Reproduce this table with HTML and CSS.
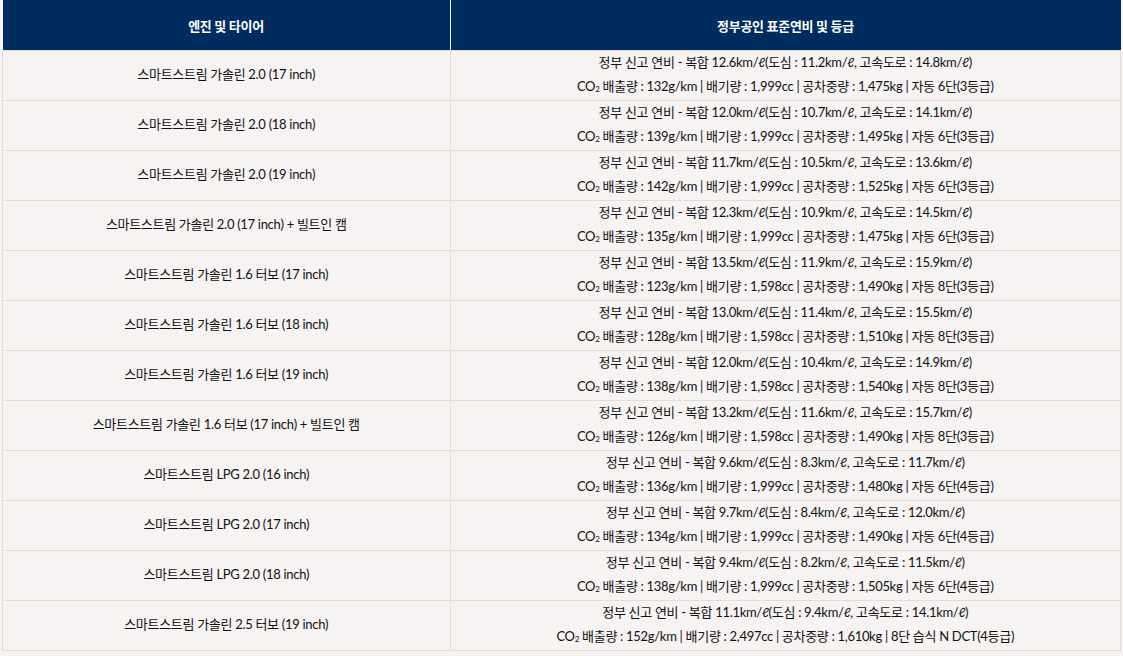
FILE: index.html
```html
<!DOCTYPE html>
<html lang="ko">
<head>
<meta charset="utf-8">
<link rel="stylesheet" href="styles.css">
</head>
<body>
<table class="spec">
  <thead>
    <tr><th class="c1">엔진 및 타이어</th><th class="c2">정부공인 표준연비 및 등급</th></tr>
  </thead>
  <tbody>
    <tr><td><div class="in">스마트스트림 가솔린 2.0 (17 inch)</div></td><td><div class="in">정부 신고 연비 - 복합 12.6km/ℓ(도심 : 11.2km/ℓ, 고속도로 : 14.8km/ℓ)<br>CO<sub>2</sub> 배출량 : 132g/km | 배기량 : 1,999cc | 공차중량 : 1,475kg | 자동 6단(3등급)</div></td></tr>
    <tr><td><div class="in">스마트스트림 가솔린 2.0 (18 inch)</div></td><td><div class="in">정부 신고 연비 - 복합 12.0km/ℓ(도심 : 10.7km/ℓ, 고속도로 : 14.1km/ℓ)<br>CO<sub>2</sub> 배출량 : 139g/km | 배기량 : 1,999cc | 공차중량 : 1,495kg | 자동 6단(3등급)</div></td></tr>
    <tr><td><div class="in">스마트스트림 가솔린 2.0 (19 inch)</div></td><td><div class="in">정부 신고 연비 - 복합 11.7km/ℓ(도심 : 10.5km/ℓ, 고속도로 : 13.6km/ℓ)<br>CO<sub>2</sub> 배출량 : 142g/km | 배기량 : 1,999cc | 공차중량 : 1,525kg | 자동 6단(3등급)</div></td></tr>
    <tr><td><div class="in">스마트스트림 가솔린 2.0 (17 inch) + 빌트인 캠</div></td><td><div class="in">정부 신고 연비 - 복합 12.3km/ℓ(도심 : 10.9km/ℓ, 고속도로 : 14.5km/ℓ)<br>CO<sub>2</sub> 배출량 : 135g/km | 배기량 : 1,999cc | 공차중량 : 1,475kg | 자동 6단(3등급)</div></td></tr>
    <tr><td><div class="in">스마트스트림 가솔린 1.6 터보 (17 inch)</div></td><td><div class="in">정부 신고 연비 - 복합 13.5km/ℓ(도심 : 11.9km/ℓ, 고속도로 : 15.9km/ℓ)<br>CO<sub>2</sub> 배출량 : 123g/km | 배기량 : 1,598cc | 공차중량 : 1,490kg | 자동 8단(3등급)</div></td></tr>
    <tr><td><div class="in">스마트스트림 가솔린 1.6 터보 (18 inch)</div></td><td><div class="in">정부 신고 연비 - 복합 13.0km/ℓ(도심 : 11.4km/ℓ, 고속도로 : 15.5km/ℓ)<br>CO<sub>2</sub> 배출량 : 128g/km | 배기량 : 1,598cc | 공차중량 : 1,510kg | 자동 8단(3등급)</div></td></tr>
    <tr><td><div class="in">스마트스트림 가솔린 1.6 터보 (19 inch)</div></td><td><div class="in">정부 신고 연비 - 복합 12.0km/ℓ(도심 : 10.4km/ℓ, 고속도로 : 14.9km/ℓ)<br>CO<sub>2</sub> 배출량 : 138g/km | 배기량 : 1,598cc | 공차중량 : 1,540kg | 자동 8단(3등급)</div></td></tr>
    <tr><td><div class="in">스마트스트림 가솔린 1.6 터보 (17 inch) + 빌트인 캠</div></td><td><div class="in">정부 신고 연비 - 복합 13.2km/ℓ(도심 : 11.6km/ℓ, 고속도로 : 15.7km/ℓ)<br>CO<sub>2</sub> 배출량 : 126g/km | 배기량 : 1,598cc | 공차중량 : 1,490kg | 자동 8단(3등급)</div></td></tr>
    <tr><td><div class="in">스마트스트림 LPG 2.0 (16 inch)</div></td><td><div class="in">정부 신고 연비 - 복합 9.6km/ℓ(도심 : 8.3km/ℓ, 고속도로 : 11.7km/ℓ)<br>CO<sub>2</sub> 배출량 : 136g/km | 배기량 : 1,999cc | 공차중량 : 1,480kg | 자동 6단(4등급)</div></td></tr>
    <tr><td><div class="in">스마트스트림 LPG 2.0 (17 inch)</div></td><td><div class="in">정부 신고 연비 - 복합 9.7km/ℓ(도심 : 8.4km/ℓ, 고속도로 : 12.0km/ℓ)<br>CO<sub>2</sub> 배출량 : 134g/km | 배기량 : 1,999cc | 공차중량 : 1,490kg | 자동 6단(4등급)</div></td></tr>
    <tr><td><div class="in">스마트스트림 LPG 2.0 (18 inch)</div></td><td><div class="in">정부 신고 연비 - 복합 9.4km/ℓ(도심 : 8.2km/ℓ, 고속도로 : 11.5km/ℓ)<br>CO<sub>2</sub> 배출량 : 138g/km | 배기량 : 1,999cc | 공차중량 : 1,505kg | 자동 6단(4등급)</div></td></tr>
    <tr><td><div class="in">스마트스트림 가솔린 2.5 터보 (19 inch)</div></td><td><div class="in">정부 신고 연비 - 복합 11.1km/ℓ(도심 : 9.4km/ℓ, 고속도로 : 14.1km/ℓ)<br>CO<sub>2</sub> 배출량 : 152g/km | 배기량 : 2,497cc | 공차중량 : 1,610kg | 8단 습식 N DCT(4등급)</div></td></tr>
  </tbody>
</table>
</body>
</html>
```
FILE: styles.css
```css
html, body {
  margin: 0;
  padding: 0;
  background: #f6f3f2;
}
body {
  padding: 0 2px;
  font-family: Lato, "Noto Sans CJK KR", sans-serif;
  font-size: 13px;
  color: #111;
  letter-spacing: -0.3px;
}
.spec {
  width: 1119px;
  border-collapse: collapse;
  table-layout: fixed;
}
.spec th {
  background: #002d5f;
  color: #fff;
  font-weight: bold;
  height: 50px;
  padding: 0;
  text-align: center;
  font-size: 13px;
}
.spec th.c1 {
  width: 447px;
  border-right: 1px solid #fff;
}
.spec td {
  height: 49px;
  padding: 0;
  text-align: center;
  vertical-align: middle;
  line-height: 24px;
  border: 1px solid #e5ddd5;
  background: #f6f3f2;
}
.spec .in {
  margin: -2px 0 2px;
}
.spec sub {
  font-size: 8px;
  vertical-align: baseline;
  position: relative;
  top: 1px;
  line-height: 0;
}
```
